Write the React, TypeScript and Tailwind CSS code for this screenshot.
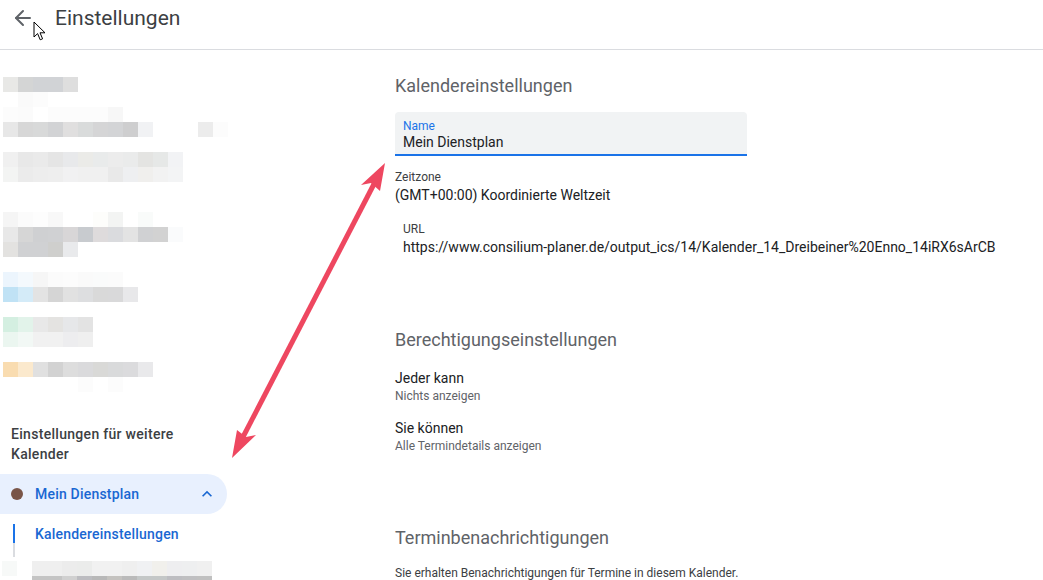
import { ArrowLeft } from "lucide-react";

// ---------- pixelated (blurred) calendar list in the sidebar ----------
const W = "#ffffff";
const MOSAIC_TOP: string[][] = [
  ["#e8e8e6", "#d4d5d5", "#d1d3d6", "#d1d3d6", "#dedede"],
  [W, "#fafafa", "#fcfcfc"],
  ["#fcfcfc", "#fbfbfb", W, "#fcfcfc", "#fcfcfc", "#fcfcfc", "#fcfcfc", "#f7f7f7"],
  ["#e7e7e7", "#d7d7d7", "#d8d9d9", "#d2d3d5", "#e0dfdf", "#d9dbdb", "#d5d5d6", "#d3d4d6", "#cececf", "#f1f2f4", W, W, W, "#ececec", "#fcfcfc"],
  [],
  ["#f0f0f0", "#e8e8e8", "#eaeaea", "#e5e5e5", "#e8e9eb", "#ebebe8", "#e9ebeb", "#ececec", "#eaebeb", "#e4e4e2", "#e6e8e7", "#f2f3f5"],
  ["#f3f4f3", "#ebebeb", "#ededed", "#eeeeee", "#f1f1f2", "#f0f0f0", "#f0f0f0", "#e9e9e9", "#eeeff1", "#f0efed", "#f2f2f2", "#f3f4f5"],
  [],
  [],
  ["#f5f5f5", "#fbfbfb", "#fdfdfd", "#f8f8f8", W, W, "#fdfdfb", "#f3f4f3", W, "#f9fbfa"],
  ["#e8e8e8", "#d6d6d6", "#cfd0d2", "#d0d1d3", "#d8d6d7", "#c8cbcf", "#dedbdc", "#dadbde", "#e3e3e3", "#d0d1d3", "#d2d2d2", "#fafbfc"],
  ["#e3e2e0", "#d0d1d3", "#d0d1d3", "#cfcfcd", "#e9eaec"],
  [],
  ["#ecf5fd", "#f4f9fd", "#f6f6f6", "#fbfbfb", "#fcfcfc", "#fafafa", "#fafbfb", "#fbfbfb"],
  ["#c0e2f5", "#d4ebf8", "#e3e3e3", "#d5d5d5", "#e1e1e1", "#dddee0", "#d9d9d9", "#d9d9da", "#e8e8ea"],
  [],
  ["#d4efe1", "#e2f3ea", "#e8e8e8", "#e4e3e1", "#e6e7e9", "#e3e3e3"],
  ["#ebf6f0", "#f2f8f5", "#f1f1f1", "#f1f1f1", "#ededef", "#efefef"],
  [],
  ["#f9dcb0", "#fbe9cd", "#e0e0e0", "#d2d2d2", "#dddddd", "#dadadc", "#d9d9d7", "#d9dadb", "#dbdbdd", "#e9e9eb"],
  [W, W, W, W, W, "#fcfcfc", W, "#fcfcfc"],
];

const MOSAIC_BOTTOM: string[][] = [
  ["#f7f9f8", W, "#efefef", "#efefef", "#ececec", "#ebeceb", "#f1f1f1", "#f1f1f1", "#efefef", "#f0f1f3", "#f1f0ec", "#eeeef0", "#eeeff0", "#f0f0f0"],
  [W, W, "#c4c4c4", "#c4c4c4", "#d0d0d0", "#bcbcc0", "#b8b8b8", "#c4c2bf", "#bababa", "#c4c7c7", "#c4c7c7", "#bdbdc1", "#bfbfc1", "#c0c0c0"],
];

function Mosaic({ rows }: { rows: string[][] }) {
  return (
    <div className="flex flex-col">
      {rows.map((row, r) => (
        <div key={r} className="flex h-[15px]">
          {row.map((c, i) => (
            <div key={i} className="w-[15px] h-[15px]" style={{ backgroundColor: c }} />
          ))}
        </div>
      ))}
    </div>
  );
}

// ---------- red double arrow drawn over the page ----------
function RedArrow() {
  return (
    <svg
      className="absolute left-0 top-0 pointer-events-none"
      width="1043"
      height="580"
      viewBox="0 0 1043 580"
    >
      <line x1="374" y1="184" x2="243" y2="437" stroke="#ee4760" strokeWidth="5" />
      <polygon points="385,163 380,191 371,183 361,185" fill="#ee4760" />
      <polygon points="232,458 237,430 246,437 256,435" fill="#ee4760" />
    </svg>
  );
}

function Cursor() {
  return (
    <svg className="absolute left-[33px] top-[21px]" width="14" height="21" viewBox="0 0 14 21">
      <path
        d="M1 1 L1 16 L4.6 12.6 L7.2 18.8 L9.6 17.8 L7 11.8 L12 11.8 Z"
        fill="#ffffff"
        stroke="#000000"
        strokeWidth="1"
        strokeLinejoin="round"
      />
    </svg>
  );
}

function SectionTitle({ children, className = "" }: { children: string; className?: string }) {
  return (
    <h2 className={`text-[18px] leading-[24px] text-[#5f6368] ${className}`}>{children}</h2>
  );
}

export default function App() {
  return (
    <div className="relative w-[1043px] h-[580px] overflow-hidden bg-white font-['Roboto',sans-serif] text-[#202124]">
      {/* header */}
      <header className="h-[50px] border-b border-[#dadce0] flex items-start pt-[6px] pl-[11px]">
        <ArrowLeft className="w-[24px] h-[24px] text-[#5f6368]" strokeWidth={2} />
        <h1 className="ml-[20px] text-[21px] leading-[24px] text-[#3c4043]">Einstellungen</h1>
      </header>

      <div className="flex">
        {/* sidebar */}
        <aside className="w-[256px] shrink-0">
          <div className="pt-[27px] pl-[3px]">
            <Mosaic rows={MOSAIC_TOP} />
          </div>

          <div className="mt-[32px] pl-[11px] w-[200px] text-[14px] leading-[20px] tracking-[0.3px] font-medium text-[#3c4043]">
            Einstellungen für weitere Kalender
          </div>

          <div className="mt-[10px] w-[227px] h-[40px] rounded-r-full bg-[#e8f0fe] flex items-center pl-[11px] pr-[10px]">
            <span className="w-[12px] h-[12px] rounded-full bg-[#795548]" />
            <span className="ml-[12px] text-[14px] tracking-[0.2px] font-medium text-[#1967d2] flex-1">Mein Dienstplan</span>
            <svg width="20" height="20" viewBox="0 0 24 24" className="text-[#1967d2]">
              <path d="M12 8l-6 6 1.41 1.41L12 10.83l4.59 4.58L18 14z" fill="currentColor" />
            </svg>
          </div>

          <div className="ml-[13px] flex">
            <div className="flex flex-col w-[2px]">
              <div className="h-[10px]" />
              <div className="h-[19px] bg-[#1a73e8]" />
              <div className="h-[14px] bg-[#dadce0]" />
            </div>
            <div className="ml-[20px] h-[40px] flex items-center text-[14px] tracking-[0.2px] font-medium text-[#1967d2]">
              Kalendereinstellungen
            </div>
          </div>

          <div className="mt-[4px] pl-[2px]">
            <Mosaic rows={MOSAIC_BOTTOM} />
          </div>
        </aside>

        {/* main content */}
        <main className="pl-[139px] pt-[24px] flex-1">
          <SectionTitle>Kalendereinstellungen</SectionTitle>

          <div className="mt-[14px] w-[352px] h-[44px] bg-[#f1f3f4] rounded-t-[4px] border-b-2 border-[#1a73e8] pl-[8px] pt-[7px] flex flex-col">
            <span className="text-[12px] leading-[14px] text-[#1a73e8]">Name</span>
            <span className="text-[14px] leading-[19px] text-[#202124]">Mein Dienstplan</span>
          </div>

          <div className="mt-[13px]">
            <div className="text-[12px] leading-[16px] text-[#3c4043]">Zeitzone</div>
            <div className="text-[14px] leading-[20px]">(GMT+00:00) Koordinierte Weltzeit</div>
          </div>

          <div className="mt-[16px] pl-[8px]">
            <div className="text-[12px] leading-[16px] text-[#3c4043]">URL</div>
            <div className="text-[14px] leading-[20px]">
              https://www.consilium-planer.de/output_ics/14/Kalender_14_Dreibeiner%20Enno_14iRX6sArCB
            </div>
          </div>

          <SectionTitle className="mt-[71px]">Berechtigungseinstellungen</SectionTitle>

          <div className="mt-[16px]">
            <div className="text-[14px] leading-[20px]">Jeder kann</div>
            <div className="text-[12px] leading-[16px] text-[#5f6368]">Nichts anzeigen</div>
          </div>
          <div className="mt-[14px]">
            <div className="text-[14px] leading-[20px]">Sie können</div>
            <div className="text-[12px] leading-[16px] text-[#5f6368]">Alle Termindetails anzeigen</div>
          </div>

          <SectionTitle className="mt-[72px]">Terminbenachrichtigungen</SectionTitle>

          <div className="mt-[15px] text-[12px] leading-[16px] text-[#3c4043]">
            Sie erhalten Benachrichtigungen für Termine in diesem Kalender.
          </div>
        </main>
      </div>

      <RedArrow />
      <Cursor />
    </div>
  );
}
